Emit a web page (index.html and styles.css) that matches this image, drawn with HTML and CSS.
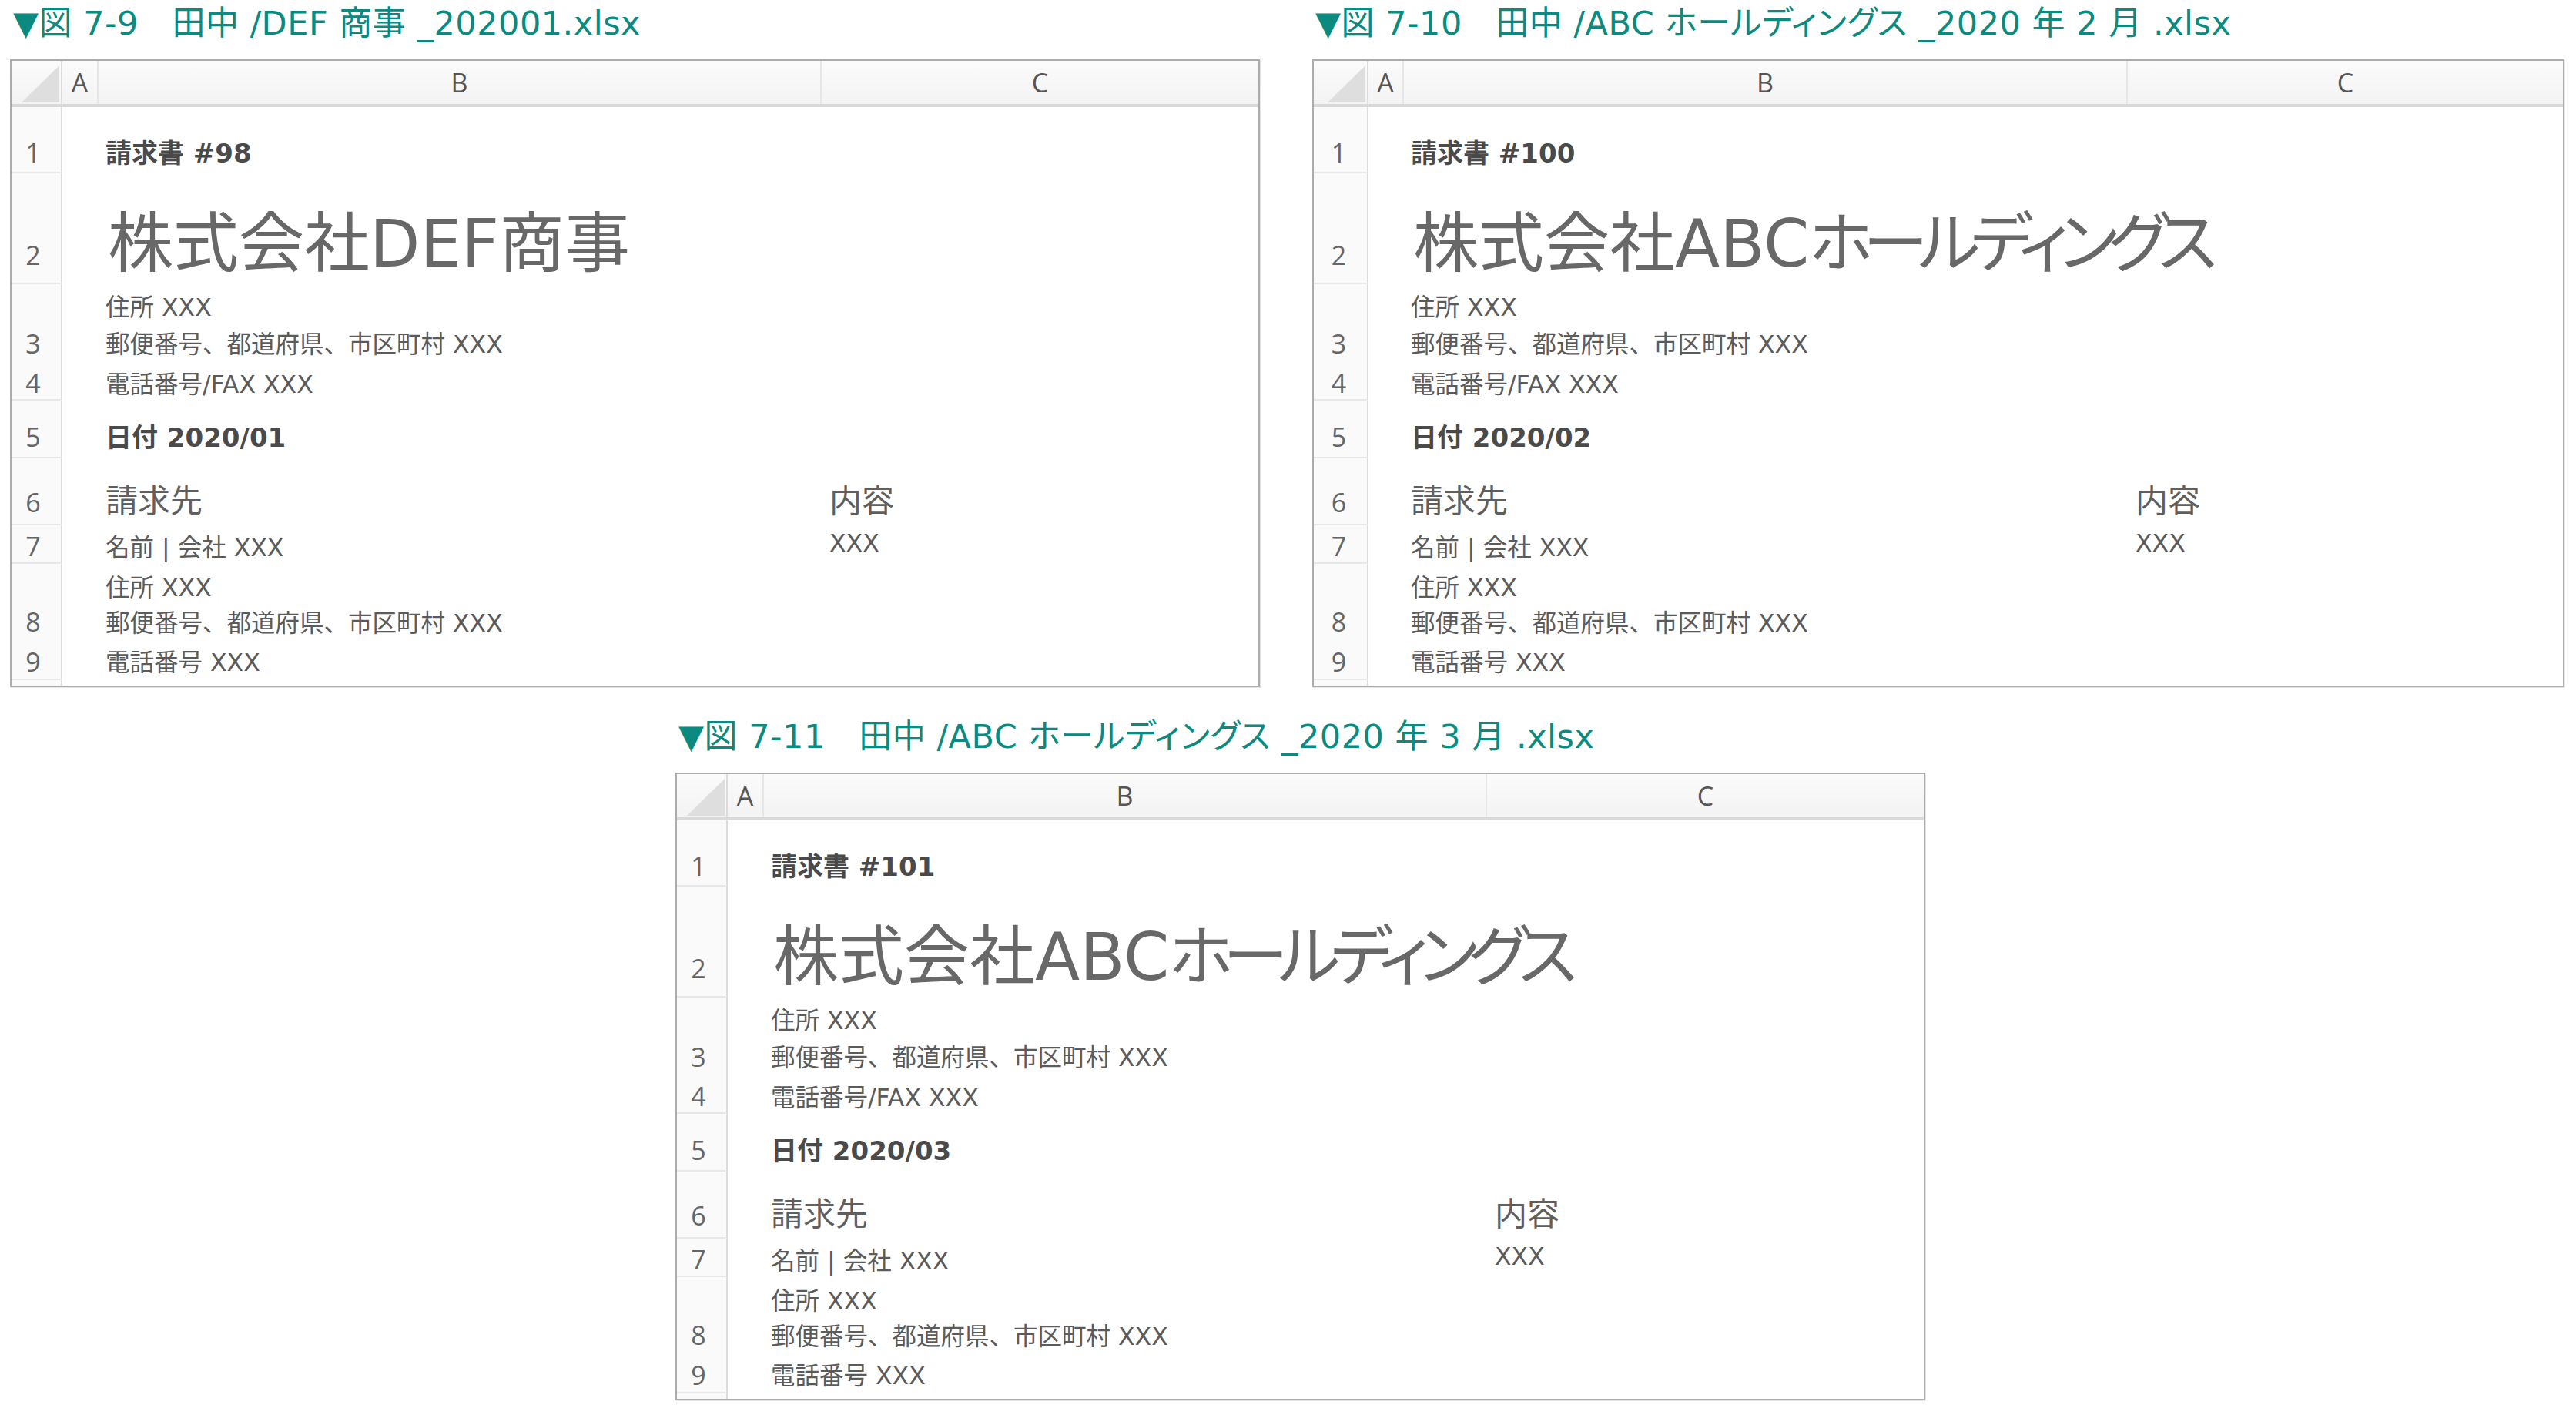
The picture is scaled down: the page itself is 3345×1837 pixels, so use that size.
FILE: index.html
```html
<!DOCTYPE html>
<html lang="ja">
<head>
<meta charset="utf-8">
<title>請求書</title>
<link rel="stylesheet" href="styles.css">
</head>
<body>
<div class="page">
  <div class="top">
    <section class="fig">
      <div class="cap">▼図 7-9　田中 /DEF 商事 _202001.xlsx</div>
      <div class="sheet">
        <div class="hdr">
          <div class="corner"><svg width="64" height="56" viewBox="0 0 64 56"><polygon points="13,54 62,54 62,6" fill="#dedede"/></svg></div>
          <div class="ch cola">A</div><div class="ch colb">B</div><div class="ch">C</div>
        </div>
        <div class="r r1"><div class="rn">1</div><div class="ca"></div><div class="cb bold">請求書 #98</div><div class="cc"></div></div>
        <div class="r r2"><div class="rn">2</div><div class="ca"></div><div class="cb big">株式会社DEF商事</div><div class="cc"></div></div>
        <div class="r r3"><div class="rn">3</div><div class="ca"></div><div class="cb"><p>住所 XXX</p><p>郵便番号、都道府県、市区町村 XXX</p></div><div class="cc"></div></div>
        <div class="r r4"><div class="rn">4</div><div class="ca"></div><div class="cb">電話番号/FAX XXX</div><div class="cc"></div></div>
        <div class="r r5"><div class="rn">5</div><div class="ca"></div><div class="cb bold">日付 2020/01</div><div class="cc"></div></div>
        <div class="r r6"><div class="rn">6</div><div class="ca"></div><div class="cb mid">請求先</div><div class="cc mid">内容</div></div>
        <div class="r r7"><div class="rn">7</div><div class="ca"></div><div class="cb">名前 | 会社 XXX</div><div class="cc">XXX</div></div>
        <div class="r r8"><div class="rn">8</div><div class="ca"></div><div class="cb"><p>住所 XXX</p><p>郵便番号、都道府県、市区町村 XXX</p></div><div class="cc"></div></div>
        <div class="r r9"><div class="rn">9</div><div class="ca"></div><div class="cb">電話番号 XXX</div><div class="cc"></div></div>
        <div class="r r10"><div class="rn"></div><div class="ca"></div><div class="cb"></div><div class="cc"></div></div>
      </div>
    </section>
    <section class="fig fig2">
      <div class="cap">▼図 7-10　田中 /ABC ホールディングス _2020 年 2 月 .xlsx</div>
      <div class="sheet wide">
        <div class="hdr">
          <div class="corner"><svg width="69" height="56" viewBox="0 0 69 56"><polygon points="18,54 67,54 67,6" fill="#dedede"/></svg></div>
          <div class="ch cola">A</div><div class="ch colb">B</div><div class="ch">C</div>
        </div>
        <div class="r r1"><div class="rn">1</div><div class="ca"></div><div class="cb bold">請求書 #100</div><div class="cc"></div></div>
        <div class="r r2"><div class="rn">2</div><div class="ca"></div><div class="cb big">株式会社ABC<span class="kana">ホールディングス</span></div><div class="cc"></div></div>
        <div class="r r3"><div class="rn">3</div><div class="ca"></div><div class="cb"><p>住所 XXX</p><p>郵便番号、都道府県、市区町村 XXX</p></div><div class="cc"></div></div>
        <div class="r r4"><div class="rn">4</div><div class="ca"></div><div class="cb">電話番号/FAX XXX</div><div class="cc"></div></div>
        <div class="r r5"><div class="rn">5</div><div class="ca"></div><div class="cb bold">日付 2020/02</div><div class="cc"></div></div>
        <div class="r r6"><div class="rn">6</div><div class="ca"></div><div class="cb mid">請求先</div><div class="cc mid">内容</div></div>
        <div class="r r7"><div class="rn">7</div><div class="ca"></div><div class="cb">名前 | 会社 XXX</div><div class="cc">XXX</div></div>
        <div class="r r8"><div class="rn">8</div><div class="ca"></div><div class="cb"><p>住所 XXX</p><p>郵便番号、都道府県、市区町村 XXX</p></div><div class="cc"></div></div>
        <div class="r r9"><div class="rn">9</div><div class="ca"></div><div class="cb">電話番号 XXX</div><div class="cc"></div></div>
        <div class="r r10"><div class="rn"></div><div class="ca"></div><div class="cb"></div><div class="cc"></div></div>
      </div>
    </section>
  </div>
  <div class="bottom">
    <section class="fig">
      <div class="cap">▼図 7-11　田中 /ABC ホールディングス _2020 年 3 月 .xlsx</div>
      <div class="sheet">
        <div class="hdr">
          <div class="corner"><svg width="64" height="56" viewBox="0 0 64 56"><polygon points="13,54 62,54 62,6" fill="#dedede"/></svg></div>
          <div class="ch cola">A</div><div class="ch colb">B</div><div class="ch">C</div>
        </div>
        <div class="r r1"><div class="rn">1</div><div class="ca"></div><div class="cb bold">請求書 #101</div><div class="cc"></div></div>
        <div class="r r2"><div class="rn">2</div><div class="ca"></div><div class="cb big">株式会社ABC<span class="kana">ホールディングス</span></div><div class="cc"></div></div>
        <div class="r r3"><div class="rn">3</div><div class="ca"></div><div class="cb"><p>住所 XXX</p><p>郵便番号、都道府県、市区町村 XXX</p></div><div class="cc"></div></div>
        <div class="r r4"><div class="rn">4</div><div class="ca"></div><div class="cb">電話番号/FAX XXX</div><div class="cc"></div></div>
        <div class="r r5"><div class="rn">5</div><div class="ca"></div><div class="cb bold">日付 2020/03</div><div class="cc"></div></div>
        <div class="r r6"><div class="rn">6</div><div class="ca"></div><div class="cb mid">請求先</div><div class="cc mid">内容</div></div>
        <div class="r r7"><div class="rn">7</div><div class="ca"></div><div class="cb">名前 | 会社 XXX</div><div class="cc">XXX</div></div>
        <div class="r r8"><div class="rn">8</div><div class="ca"></div><div class="cb"><p>住所 XXX</p><p>郵便番号、都道府県、市区町村 XXX</p></div><div class="cc"></div></div>
        <div class="r r9"><div class="rn">9</div><div class="ca"></div><div class="cb">電話番号 XXX</div><div class="cc"></div></div>
        <div class="r r10"><div class="rn"></div><div class="ca"></div><div class="cb"></div><div class="cc"></div></div>
      </div>
    </section>
  </div>
</div>
</body>
</html>
```

FILE: styles.css
```css
* { box-sizing: border-box; margin: 0; padding: 0; }
html, body { background: #fff; }
body {
  width: 3345px;
  height: 1837px;
  overflow: hidden;
  font-family: "DejaVu Sans", "Noto Sans CJK JP", sans-serif;
}
.page { padding: 5px 0 0 13px; }
.top { display: flex; gap: 68px; }
.fig { width: 1623px; display: flex; flex-direction: column; }
.fig2 { width: 1626px; }
.bottom { margin-top: 39px; padding-left: 864px; }

.cap {
  height: 50px;
  line-height: 50px;
  font-size: 43px;
  letter-spacing: 0.5px;
  color: #0d8a7f;
  font-family: "DejaVu Sans", "Noto Sans CJK JP", sans-serif;
  font-feature-settings: "palt";
  white-space: nowrap;
  padding-left: 4px;
  margin-bottom: 22px;
}

.sheet {
  border: 2px solid #acacac;
  background: #fff;
  box-shadow: 1px 1px 0 #e6e6e6;
}

.hdr, .r {
  display: grid;
  grid-template-columns: 66px 47px 939px 1fr;
}
.wide .hdr, .wide .r { grid-template-columns: 71px 46px 940px 1fr; }

.hdr {
  height: 60px;
  background: linear-gradient(#fbfbfb, #f3f3f3);
  border-bottom: 4px solid #d9d9d9;
}
.corner { border-right: 2px solid #dcdcdc; display: flex; }
.ch {
  font-family: "Open Sans", sans-serif;
  font-size: 34px;
  line-height: 56px;
  color: #555;
  text-align: center;
}
.cola, .colb { border-right: 2px solid #e6e6e6; }

.rn {
  background: #fafafa;
  border-right: 2px solid #dcdcdc;
  border-bottom: 2px solid #e8e8e8;
  font-family: "Open Sans", sans-serif;
  font-size: 34px;
  line-height: 40px;
  color: #666;
  text-align: center;
  padding-right: 8px;
}
.wide .rn { padding-right: 4px; }

.cb, .cc {
  font-size: 31.5px;
  line-height: 40px;
  color: #5b5b5b;
  white-space: nowrap;
}
.cb { padding-left: 9px; }
.cc { padding-left: 10px; }
.cb p { line-height: 48px; }
.bold { font-size: 34px; font-weight: bold; color: #4a4a4a; }
.big {
  font-size: 85px;
  line-height: 100px;
  color: #686868;
  padding-left: 12px;
}
.kana { letter-spacing: -12px; font-feature-settings: "palt"; }
.mid { font-size: 42px; line-height: 50px; color: #5f5f5f; }

.r1 { height: 86px; }
.r2 { height: 144px; }
.r3 { height: 99px; }
.r4 { height: 52px; }
.r5 { height: 75px; }
.r6 { height: 87px; }
.r7 { height: 50px; }
.r8 { height: 98px; }
.r9 { height: 53px; }
.r10 { height: 7px; }
.r10 .rn { border-bottom: 0; }

.r1 .rn { padding-top: 39px; }
.r2 .rn { padding-top: 86px; }
.r3 .rn { padding-top: 57px; }
.r4 .rn { padding-top: 9px; }
.r5 .rn { padding-top: 27px; }
.r6 .rn { padding-top: 37px; }
.r7 .rn { padding-top: 7px; }
.r8 .rn { padding-top: 55px; }
.r9 .rn { padding-top: 9px; }

.r1 .cb { padding-top: 40px; }
.r2 .cb { padding-top: 42px; }
.r3 .cb { padding-top: 6px; }
.r4 .cb { padding-top: 11px; }
.r5 .cb { padding-top: 28px; }
.r6 .cb { padding-top: 31px; }
.r6 .cc { padding-top: 31px; }
.r7 .cb { padding-top: 9px; }
.r7 .cc { padding-top: 3px; }
.r8 .cb { padding-top: 8px; }
.r8 .cb p { line-height: 46px; }
.r9 .cb { padding-top: 10px; }
```
